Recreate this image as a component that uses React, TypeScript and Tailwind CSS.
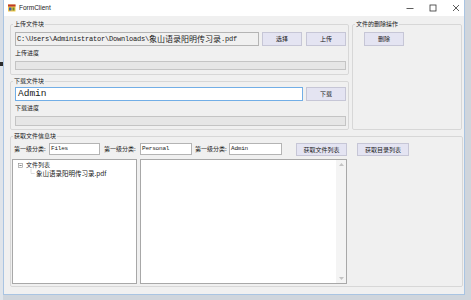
import React from "react";

const ui = "font-['Noto_Sans_CJK_SC',sans-serif]";
const mono = "font-['Liberation_Mono','Noto_Sans_CJK_SC',monospace]";

function Btn({ w, h = 14, children }: { w: string; h?: number; children: React.ReactNode }) {
  return (
    <div
      className={`${w} ${h === 14 ? "h-[14px]" : "h-[13px]"} shrink-0 flex items-center justify-center border border-[#c6c6d6] bg-[#e4e4f2] text-[6px] leading-[8px] text-[#1a1a1a] ${ui}`}
    >
      {children}
    </div>
  );
}

function Progress({ h }: { h: string }) {
  return <div className={`w-[331px] ${h} border border-[#c4c4c4] bg-[#e6e6e6]`} />;
}

function Legend({ children }: { children: React.ReactNode }) {
  return (
    <legend className={`ml-[2px] px-[1px] text-[6px] leading-[8px] text-[#1a1a1a] ${ui}`}>{children}</legend>
  );
}

export default function App() {
  return (
    <div className="w-[471px] h-[300px] overflow-hidden bg-[#cfd5dc] flex">
      <div className="w-[3px] h-full flex flex-col">
        <div className="h-[62px] bg-[#d8dee6]" />
        <div className="h-[4px] bg-[#2b2b2b]" />
        <div className="flex-1 bg-[#dfe4ea]" />
      </div>
      <div className="w-[462px] h-[295px] flex flex-col border-l border-r border-b border-[#a9c4e2] bg-white">
        {/* title bar */}
        <div className="h-[16px] shrink-0 flex items-center bg-white">
          <svg className="ml-[4px] w-[8px] h-[8px]" viewBox="0 0 8 8">
            <rect x="0" y="0.5" width="7.5" height="7" fill="#f3c74b" />
            <rect x="0" y="0.5" width="7.5" height="2" fill="#c0392b" />
            <rect x="1" y="3.5" width="2.5" height="3" fill="#3b5fa8" />
            <rect x="4.5" y="3.5" width="2" height="3" fill="#6a8a2f" />
          </svg>
          <span className="ml-[3px] text-[6.5px] leading-[8px] text-[#222] font-['Liberation_Sans',sans-serif]">
            FormClient
          </span>
          <div className="ml-auto flex items-center pr-[4px]">
            <svg className="w-[8px] h-[8px]" viewBox="0 0 8 8">
              <line x1="0.5" y1="4.5" x2="7.5" y2="4.5" stroke="#333" strokeWidth="0.8" />
            </svg>
            <svg className="ml-[15px] w-[8px] h-[8px]" viewBox="0 0 8 8">
              <rect x="1" y="1" width="6" height="6" fill="none" stroke="#333" strokeWidth="0.8" />
            </svg>
            <svg className="ml-[15px] w-[8px] h-[8px]" viewBox="0 0 8 8">
              <line x1="1" y1="1" x2="7" y2="7" stroke="#333" strokeWidth="0.8" />
              <line x1="7" y1="1" x2="1" y2="7" stroke="#333" strokeWidth="0.8" />
            </svg>
          </div>
        </div>
        {/* client */}
        <div className="h-[278px] bg-[#f0f0f0] pl-[6px] pr-[1px] pt-[4px] flex flex-col">
          <div className="flex items-start">
            <div className="w-[339px] flex flex-col">
              <fieldset className="border border-[#d7d7d7] rounded-[2px]">
                <Legend>上传文件块</Legend>
                <div className="pl-[4px] pr-[2px] pt-[4px] pb-[4px]">
                  <div className="flex h-[14px]">
                    <div className="w-[244px] h-[14px] border border-[#b4b4b4] bg-[#f0f0f0] flex items-center pl-[1px] text-[#1a1a1a] whitespace-nowrap overflow-hidden">
                      <span className={`${mono} text-[7px] tracking-[-0.2px] leading-[10px]`}>
                        C:\Users\Administrator\Downloads\
                      </span>
                      <span className={`${ui} text-[8px] leading-[10px]`}>象山语录阳明传习录</span>
                      <span className={`${mono} text-[7px] tracking-[-0.2px] leading-[10px]`}>.pdf</span>
                    </div>
                    <div className="ml-[3px]">
                      <Btn w="w-[40px]">选择</Btn>
                    </div>
                    <div className="ml-[4px]">
                      <Btn w="w-[40px]">上传</Btn>
                    </div>
                  </div>
                  <div className={`mt-[3px] h-[8px] text-[6px] leading-[8px] text-[#1a1a1a] ${ui}`}>上传进度</div>
                  <div className="mt-[4px]">
                    <Progress h="h-[9px]" />
                  </div>
                </div>
              </fieldset>
              <fieldset className="mt-[2px] border border-[#d7d7d7] rounded-[2px]">
                <Legend>下载文件块</Legend>
                <div className="pl-[4px] pr-[2px] pt-[2px] pb-[3px]">
                  <div className="flex h-[14px]">
                    <div className="w-[288px] h-[14px] border border-[#72aee6] bg-white flex items-center pl-[2px] overflow-hidden">
                      <span className={`${mono} text-[9.5px] leading-[10px] text-[#1a1a1a]`}>Admin</span>
                    </div>
                    <div className="ml-[3px]">
                      <Btn w="w-[40px]">下载</Btn>
                    </div>
                  </div>
                  <div className={`mt-[3px] h-[8px] text-[6px] leading-[8px] text-[#1a1a1a] ${ui}`}>下载进度</div>
                  <div className="mt-[4px]">
                    <Progress h="h-[10px]" />
                  </div>
                </div>
              </fieldset>
            </div>
            <fieldset className="ml-[3px] w-[110px] h-[110px] border border-[#d7d7d7] rounded-[2px]">
              <Legend>文件的删除操作</Legend>
              <div className="pl-[11px] pt-[4px]">
                <Btn w="w-[40px]">删除</Btn>
              </div>
            </fieldset>
          </div>
          <fieldset className="mt-[2px] w-[453px] border border-[#d7d7d7] rounded-[2px]">
            <Legend>获取文件信息块</Legend>
            <div className="pt-[3px] pb-[2px]">
              <div className="flex items-start h-[13px] pl-[3px]">
                <div className={`w-[35px] h-[12px] flex items-center text-[6px] leading-[8px] text-[#1a1a1a] ${ui}`}>第一级分类:</div>
                <div className="w-[51px] h-[12px] border border-[#b4b4b4] bg-white flex items-center pl-[1px]">
                  <span className={`${mono} text-[6px] leading-[8px] tracking-[-0.2px] text-[#1a1a1a]`}>Files</span>
                </div>
                <div className={`ml-[4px] w-[36px] h-[12px] flex items-center text-[6px] leading-[8px] text-[#1a1a1a] ${ui}`}>第一级分类:</div>
                <div className="w-[52px] h-[12px] border border-[#b4b4b4] bg-white flex items-center pl-[1px]">
                  <span className={`${mono} text-[6px] leading-[8px] tracking-[-0.2px] text-[#1a1a1a]`}>Personal</span>
                </div>
                <div className={`ml-[3px] w-[34px] h-[12px] flex items-center text-[6px] leading-[8px] text-[#1a1a1a] ${ui}`}>第一级分类:</div>
                <div className="w-[53px] h-[12px] border border-[#b4b4b4] bg-white flex items-center pl-[1px]">
                  <span className={`${mono} text-[6px] leading-[8px] tracking-[-0.2px] text-[#1a1a1a]`}>Admin</span>
                </div>
                <div className="ml-[14px]">
                  <Btn w="w-[51px]" h={13}>获取文件列表</Btn>
                </div>
                <div className="ml-[10px]">
                  <Btn w="w-[52px]" h={13}>获取目录列表</Btn>
                </div>
              </div>
              <div className="mt-[3px] flex pl-[1px]">
                {/* tree */}
                <div className="w-[125px] h-[125px] border border-[#a8a8a8] bg-white pt-[1px]">
                  <div className="flex items-center h-[8px] pl-[5px]">
                    <svg className="w-[5px] h-[5px]" viewBox="0 0 5 5">
                      <rect x="0.5" y="0.5" width="4" height="4" fill="white" stroke="#8a8a8a" strokeWidth="0.6" />
                      <line x1="1.4" y1="2.5" x2="3.6" y2="2.5" stroke="#333" strokeWidth="0.6" />
                    </svg>
                    <span className={`ml-[3px] text-[6px] leading-[8px] text-[#1a1a1a] ${ui}`}>文件列表</span>
                  </div>
                  <div className="flex items-center h-[8px] pl-[17px]">
                    <svg className="w-[6px] h-[8px]" viewBox="0 0 6 8">
                      <line x1="1" y1="0" x2="1" y2="4.5" stroke="#999" strokeWidth="0.6" strokeDasharray="0.6 0.6" />
                      <line x1="1" y1="4.5" x2="5" y2="4.5" stroke="#999" strokeWidth="0.6" strokeDasharray="0.6 0.6" />
                    </svg>
                    <span className={`text-[6.5px] leading-[8px] text-[#1a1a1a] ${ui}`}>象山语录阳明传习录.pdf</span>
                  </div>
                </div>
                {/* list */}
                <div className="ml-[3px] w-[207px] h-[125px] border border-[#a8a8a8] bg-white flex">
                  <div className="flex-1" />
                  <div className="w-[10px] h-full bg-[#f4f4f4] flex flex-col items-center justify-between py-[3px]">
                    <svg className="w-[5px] h-[3px]" viewBox="0 0 5 3">
                      <polygon points="0,3 2.5,0 5,3" fill="#c4c4c4" />
                    </svg>
                    <svg className="w-[5px] h-[3px]" viewBox="0 0 5 3">
                      <polygon points="0,0 5,0 2.5,3" fill="#c4c4c4" />
                    </svg>
                  </div>
                </div>
              </div>
            </div>
          </fieldset>
        </div>
      </div>
    </div>
  );
}
